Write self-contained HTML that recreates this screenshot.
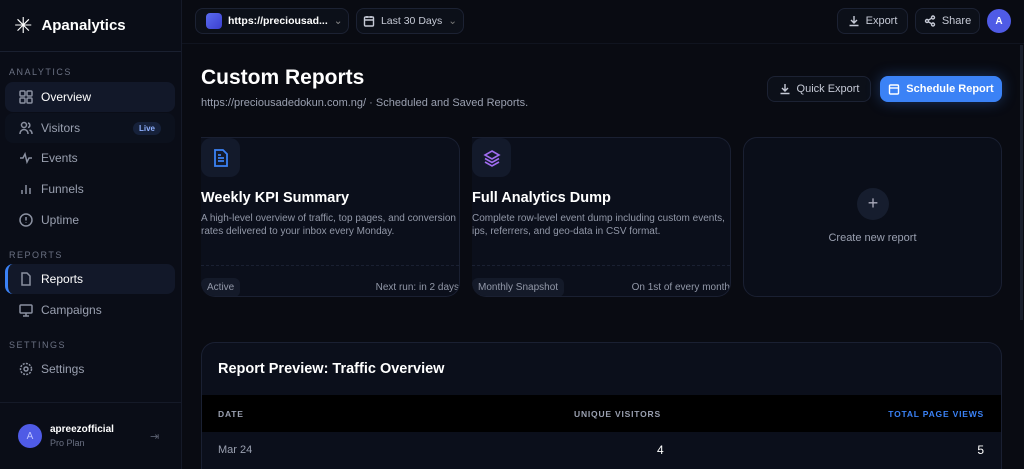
<!DOCTYPE html>
<html style="width:1024px;height:469px;overflow:hidden"><head><style>
*{box-sizing:border-box;margin:0;padding:0}
body{width:1024px;height:469px;overflow:hidden;background:#090b12;font-family:"Liberation Sans",sans-serif;color:#e6e8ef;position:relative}
.sb{position:absolute;left:0;top:0;width:182px;height:469px;background:#0a0d17;border-right:1px solid #151a28}
.logo{height:52px;border-bottom:1px solid #1a2030;display:flex;align-items:center;padding-left:14px;font-weight:bold;font-size:15px;color:#fff}
.sec{font-size:9px;letter-spacing:1.5px;color:#6b7183;padding-left:9px}
.it{position:absolute;left:5px;width:170px;height:30px;border-radius:8px;display:flex;align-items:center;padding-left:14px;font-size:12px;color:#9aa0b0;gap:8px}
.it svg{width:14px;height:14px;stroke:#8a90a0;fill:none;stroke-width:1.5}
.act{background:#121829;color:#fff}
.btn{position:absolute;height:26px;border:1px solid #1c2233;border-radius:8px;display:flex;align-items:center;justify-content:center;gap:6px;font-size:11px;color:#c6cad6;background:#0c1019;padding:0 10px;white-space:nowrap}
.btn svg{width:12px;height:12px;fill:none;stroke:currentColor;stroke-width:1.4;flex-shrink:0}
.card{position:absolute;top:137px;width:259px;height:160px;border:1px solid #1a2032;border-radius:14px;background:#0b0f1b;overflow:hidden}
.ib{position:absolute;left:0;top:0;width:39px;height:39px;background:#131a2b;border-radius:10px;display:flex;align-items:center;justify-content:center}
.ct{position:absolute;left:0;top:52px;font-size:14.5px;font-weight:bold;color:#fff}
.cd{position:absolute;left:0;top:74px;font-size:10px;line-height:13px;color:#9298a8;width:262px}
.cl{position:absolute;left:0;right:0;top:127px;border-top:1px dashed #1a2032}
.tag{position:absolute;left:0;top:140px;height:19px;padding:0 6px;background:#141a29;border-radius:6px;font-size:10px;color:#9298a8;line-height:19px}
.nx{position:absolute;right:0;top:144px;font-size:10px;color:#9298a8}
</style></head><body>
<div class="sb">
<div class="logo"><span style="font-size:22px;margin-right:9px;font-weight:normal">✳</span>Apanalytics</div>
<div class="sec" style="position:absolute;top:67px">ANALYTICS</div>
<div class="it act" style="top:82px"><svg viewBox="0 0 14 14"><rect x="1" y="1" width="5" height="5" rx="1"/><rect x="8" y="1" width="5" height="5" rx="1"/><rect x="1" y="8" width="5" height="5" rx="1"/><rect x="8" y="8" width="5" height="5" rx="1"/></svg>Overview</div>
<div class="it" style="top:113px;background:#0c111d"><svg viewBox="0 0 14 14"><circle cx="5" cy="4" r="2.5"/><path d="M1 13c0-3 2-4.5 4-4.5s4 1.5 4 4.5M9 2a2.3 2.3 0 010 4.5M10.5 9c1.5.5 2.5 2 2.5 4"/></svg>Visitors<span style="margin-left:auto;margin-right:14px;font-size:8px;font-weight:bold;color:#8fb0ff;background:#16213a;border-radius:8px;padding:2px 6px">Live</span></div>
<div class="it" style="top:143px"><svg viewBox="0 0 14 14"><path d="M1 7h3l2-4 2 8 2-4h3"/></svg>Events</div>
<div class="it" style="top:174px"><svg viewBox="0 0 14 14"><path d="M3 12V8M7 12V3M11 12V6"/></svg>Funnels</div>
<div class="it" style="top:205px"><svg viewBox="0 0 14 14"><circle cx="7" cy="7" r="6"/><path d="M7 4v3.5M7 9.5v.5"/></svg>Uptime</div>
<div class="sec" style="position:absolute;top:250px">REPORTS</div>
<div class="it act" style="top:264px;border-left:3px solid #3b82f6;padding-left:11px"><svg viewBox="0 0 14 14"><path d="M3 1h5l3 3v9H3z"/></svg>Reports</div>
<div class="it" style="top:295px"><svg viewBox="0 0 14 14"><rect x="1" y="2" width="12" height="8" rx="1"/><path d="M7 10v3M4 13h6"/></svg>Campaigns</div>
<div class="sec" style="position:absolute;top:340px">SETTINGS</div>
<div class="it" style="top:354px"><svg viewBox="0 0 14 14"><circle cx="7" cy="7" r="2"/><circle cx="7" cy="7" r="5.5" stroke-dasharray="2 1.2"/></svg>Settings</div>
<div style="position:absolute;top:402px;left:0;right:0;border-top:1px solid #151a28"></div>
<div style="position:absolute;left:18px;top:424px;width:24px;height:24px;border-radius:50%;background:#4f5be6;color:#c0c6ff;font-size:10px;display:flex;align-items:center;justify-content:center">A</div>
<div style="position:absolute;left:50px;top:424px;font-size:10px;font-weight:bold;color:#fff">apreezofficial</div>
<div style="position:absolute;left:50px;top:438px;font-size:9px;color:#6b7183">Pro Plan</div>
<div style="position:absolute;left:150px;top:430px;font-size:11px;color:#5a6070">⇥</div>
</div>

<div style="position:absolute;left:182px;top:0;right:0;height:44px;border-bottom:1px solid #10141f"></div>
<div class="btn" style="left:195px;top:8px;width:154px;font-weight:bold;color:#fff;justify-content:flex-start;font-size:10.5px"><span style="width:16px;height:16px;flex-shrink:0;border-radius:4px;background:linear-gradient(135deg,#5b6cf0,#3b3fd0)"></span>https://preciousad...<span style="color:#888;margin-left:auto;font-weight:normal">⌄</span></div>
<div class="btn" style="left:356px;top:8px;width:108px;font-size:10.5px"><svg viewBox="0 0 12 12"><rect x="1.5" y="2" width="9" height="9" rx="1"/><path d="M1.5 5h9M4 1v2M8 1v2"/></svg>Last 30 Days <span style="color:#777">⌄</span></div>
<div class="btn" style="left:837px;top:8px;width:71px"><svg viewBox="0 0 12 12"><path d="M6 1v7M3 5l3 3 3-3M1.5 10.5h9"/></svg>Export</div>
<div class="btn" style="left:915px;top:8px;width:65px"><svg viewBox="0 0 12 12"><circle cx="9" cy="2.5" r="1.5"/><circle cx="3" cy="6" r="1.5"/><circle cx="9" cy="9.5" r="1.5"/><path d="M4.3 5.2l3.4-2M4.3 6.8l3.4 2"/></svg>Share</div>
<div style="position:absolute;left:987px;top:9px;width:24px;height:24px;border-radius:50%;background:#4f5be6;color:#fff;font-size:10px;font-weight:bold;display:flex;align-items:center;justify-content:center">A</div>
<div style="position:absolute;left:1020px;top:45px;width:3px;height:275px;background:#1a1f2c"></div>

<div style="position:absolute;left:201px;top:66px;font-size:21px;font-weight:bold;color:#fff">Custom Reports</div>
<div style="position:absolute;left:201px;top:97px;font-size:11px;color:#9aa0b0">https://preciousadedokun.com.ng/ · Scheduled and Saved Reports.</div>
<div class="btn" style="left:767px;top:76px;width:104px"><svg viewBox="0 0 12 12"><path d="M6 1v7M3 5l3 3 3-3M1.5 10.5h9"/></svg>Quick Export</div>
<div class="btn" style="left:880px;top:76px;width:122px;background:#3b82f6;border-color:#3b82f6;color:#fff;font-weight:bold;box-shadow:0 0 14px rgba(59,130,246,.35)"><svg viewBox="0 0 12 12"><rect x="1.5" y="2" width="9" height="9" rx="1"/><path d="M1.5 5h9"/></svg>Schedule Report</div>

<div class="card" style="left:201px;border-left:none;border-top-left-radius:0"><div class="ib"><svg width="16" height="18" viewBox="0 0 16 18" fill="none" stroke="#3b82f6" stroke-width="1.8"><path d="M2 1h8l4 4v12H2z"/><path d="M5 9h6M5 12h6M5 6h3"/></svg></div>
<div class="ct">Weekly KPI Summary</div><div class="cd">A high-level overview of traffic, top pages, and conversion rates delivered to your inbox every Monday.</div><div class="cl"></div><div class="tag">Active</div><div class="nx">Next run: in 2 days</div></div>
<div class="card" style="left:472px;border-left:none;border-top-left-radius:0"><div class="ib"><svg width="18" height="18" viewBox="0 0 18 18" fill="none" stroke="#a06cf0" stroke-width="1.6"><path d="M9 2l7 4-7 4-7-4z"/><path d="M2 9.5l7 4 7-4M2 13l7 4 7-4"/></svg></div>
<div class="ct">Full Analytics Dump</div><div class="cd">Complete row-level event dump including custom events, ips, referrers, and geo-data in CSV format.</div><div class="cl"></div><div class="tag">Monthly Snapshot</div><div class="nx">On 1st of every month</div></div>
<div class="card" style="left:743px;background:#0a0e19"><div style="position:absolute;left:113px;top:50px;width:32px;height:32px;border-radius:50%;background:#161d2e;color:#aab;font-size:18px;text-align:center;line-height:31px">+</div><div style="position:absolute;left:0;right:0;top:94px;text-align:center;font-size:11px;color:#9aa0b0">Create new report</div></div>

<div style="position:absolute;left:201px;top:342px;width:801px;height:127px;border:1px solid #1a2032;border-bottom:none;border-radius:14px 14px 0 0;background:#0b0f1b;overflow:hidden">
<div style="position:absolute;left:16px;top:18px;font-size:14.5px;font-weight:bold;color:#fff">Report Preview: Traffic Overview</div>
<div style="position:absolute;left:0;right:0;top:52px;height:37px;background:#000;font-size:8.5px;font-weight:bold;letter-spacing:.8px;color:#9aa0b0">
<span style="position:absolute;left:16px;top:14px">DATE</span><span style="position:absolute;left:372px;top:14px">UNIQUE VISITORS</span><span style="position:absolute;right:17px;top:14px;color:#3b82f6">TOTAL PAGE VIEWS</span></div>
<div style="position:absolute;left:16px;top:101px;font-size:11px;color:#9aa0b0">Mar 24</div>
<div style="position:absolute;left:455px;top:100px;font-size:12px;color:#fff">4</div>
<div style="position:absolute;right:17px;top:100px;font-size:12px;color:#fff">5</div>
</div>
</body></html>
